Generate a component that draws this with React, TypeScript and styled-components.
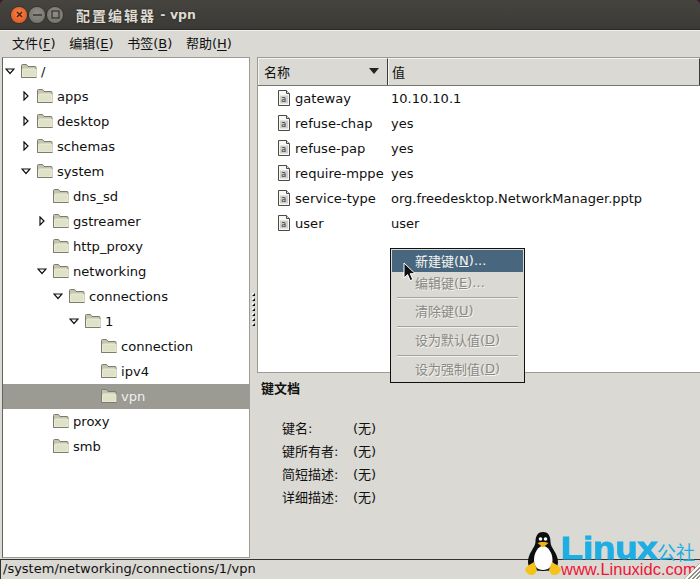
import React from "react";
import styled, { createGlobalStyle } from "styled-components";

const Global = createGlobalStyle`
  html, body { margin: 0; padding: 0; background: #dad9d4; }
  #root { width: 700px; height: 579px; overflow: hidden; }
`;

const FONT = `"DejaVu Sans", "Noto Sans CJK SC", sans-serif`;

const Window = styled.div`
  position: relative;
  width: 700px;
  height: 579px;
  display: flex;
  flex-direction: column;
  overflow: hidden;
  background: #3a1a30;
  font-family: ${FONT};
  font-size: 13.1px;
  color: #101010;
`;

const TitleBar = styled.div`
  height: 30px;
  flex: none;
  display: flex;
  align-items: center;
  padding-left: 11px;
  background: linear-gradient(#46443f, #3b3a36);
  border-radius: 5px 5px 0 0;
  box-sizing: border-box;
  border-bottom: 1px solid #2b2a26;
`;

const WinButton = styled.span<{ $bg: string }>`
  width: 16px;
  height: 16px;
  margin-right: 2px;
  border-radius: 50%;
  display: flex;
  align-items: center;
  justify-content: center;
  background: ${(p) => p.$bg};
  box-shadow: 0 0 0 1px #34332f;
`;

const Title = styled.div`
  margin-left: 11px;
  display: flex;
  align-items: center;
  font-weight: 700;
  color: #dfdbd2;
  text-shadow: 0 0 2px #1c1b18;
  white-space: nowrap;
`;

const TitleCn = styled.span`
  font-size: 14px;
  letter-spacing: 2px;
`;

const TitleLatin = styled.span`
  font-size: 12.5px;
  white-space: pre;
`;

const MenuBar = styled.div`
  height: 26px;
  flex: none;
  display: flex;
  align-items: center;
  gap: 13.6px;
  padding: 0 0 2px 12px;
  box-sizing: border-box;
  background: #dad9d4;
  border-top: 1px solid #f0efec;
`;

const MenuLabel = styled.span`
  font-size: 13px;
  u { text-underline-offset: 2px; }
`;

const Body = styled.div`
  flex: 1;
  min-height: 0;
  display: flex;
  padding-left: 2px;
  background: #dad9d4;
`;

const TreePanel = styled.div`
  width: 248px;
  flex: none;
  margin-top: 1px;
  margin-bottom: 1px;
  box-sizing: border-box;
  background: #fff;
  border: 1px solid #9d9b94;
  border-left-color: #64635d;
  padding-top: 1px;
`;

const TreeRow = styled.div<{ $depth: number; $selected?: boolean }>`
  height: 25px;
  display: flex;
  align-items: center;
  padding-left: ${(p) => p.$depth * 16}px;
  padding-bottom: 1px;
  box-sizing: border-box;
  background: ${(p) => (p.$selected ? "#9b9a93" : "transparent")};
  color: ${(p) => (p.$selected ? "#f0efec" : "#101010")};
`;

const ArrowSlot = styled.span<{ $open?: boolean }>`
  width: 17px;
  height: 16px;
  flex: none;
  display: flex;
  align-items: center;
  box-sizing: border-box;
  padding-left: ${(p) => (p.$open ? 2 : 4)}px;
`;

const RowName = styled.span`
  margin-left: 3px;
`;

const Splitter = styled.div`
  width: 7px;
  flex: none;
  display: flex;
  flex-direction: column;
  justify-content: center;
  align-items: center;
  gap: 2px;
  padding-top: 3px;
  box-sizing: border-box;
`;

const GripDot = styled.span`
  width: 3px;
  height: 3px;
  background: linear-gradient(135deg, #fff 0 45%, #111 55%);
`;

const RightPanel = styled.div`
  flex: 1;
  min-width: 0;
  display: flex;
  flex-direction: column;
`;

const ListBox = styled.div`
  height: 316px;
  flex: none;
  margin-top: 1px;
  box-sizing: border-box;
  background: #fff;
  border: 1px solid #9d9b94;
  border-right: none;
`;

const HeaderRow = styled.div`
  height: 28px;
  display: flex;
  box-sizing: border-box;
  background: #dad9d4;
  border-bottom: 1px solid #77766f;
`;

const HeaderCell = styled.div<{ $width?: number }>`
  ${(p) => (p.$width ? `width: ${p.$width}px; flex: none;` : "flex: 1;")}
  display: flex;
  align-items: center;
  justify-content: space-between;
  box-sizing: border-box;
  padding: 0 8px 2px ${(p) => (p.$width ? 5 : 3)}px;
  font-size: 13px;
  border-left: 1px solid #f5f4f1;
  border-top: 1px solid #f5f4f1;
  border-right: 1px solid #3c3c38;
`;

const KeyRow = styled.div`
  height: 25px;
  padding-bottom: 1px;
  box-sizing: border-box;
  display: flex;
  align-items: center;
`;

const KeyName = styled.div`
  width: 130px;
  flex: none;
  display: flex;
  align-items: center;
  gap: 5px;
  padding-left: 20px;
  box-sizing: border-box;
`;

const KeyValue = styled.span`
  padding-left: 3px;
  font-size: 13px;
`;

const DocSection = styled.div`
  flex: 1;
  padding: 5px 0 0 4px;
`;

const DocTitle = styled.div`
  font-weight: 700;
  font-size: 13px;
  height: 18px;
`;

const DocGrid = styled.div`
  margin: 20px 0 0 21px;
  display: grid;
  grid-template-columns: 71px auto;
  grid-auto-rows: 23px;
  align-items: center;
  justify-content: start;
  font-size: 13px;
`;

const StatusBar = styled.div`
  height: 20px;
  flex: none;
  box-sizing: border-box;
  padding-left: 3px;
  background: linear-gradient(90deg, #33332f 0 1px, #dad9d4 1px) no-repeat;
  background-color: #dad9d4;
  border-top: 1px solid #33332f;
  font-size: 13px;
  line-height: 18px;
  white-space: nowrap;
`;

const ContextMenu = styled.div`
  position: absolute;
  left: 390px;
  top: 248px;
  width: 135px;
  height: 135px;
  box-sizing: border-box;
  background: #dad9d4;
  border: 1px solid #111;
  padding: 1px;
  font-size: 13px;
  z-index: 2;
`;

const MenuItem = styled.div<{ $active?: boolean }>`
  height: 22px;
  display: flex;
  align-items: center;
  padding: 0 0 1px 23px;
  box-sizing: border-box;
  background: ${(p) => (p.$active ? "#48677f" : "transparent")};
  color: ${(p) => (p.$active ? "#f5f5f2" : "#8a8983")};
  text-shadow: ${(p) => (p.$active ? "none" : "1px 1px 0 #f4f3f0")};
`;

const MenuRule = styled.div<{ $top: number }>`
  height: 1px;
  margin: ${(p) => p.$top}px 5px 2px 5px;
  background: #a3a29b;
  box-shadow: 0 1px 0 #f2f1ee;
`;

const Cursor = styled.svg`
  position: absolute;
  left: 403px;
  top: 262px;
  z-index: 3;
`;

const Watermark = styled.div`
  position: absolute;
  left: 524px;
  top: 530px;
  width: 176px;
  height: 49px;
  z-index: 2;
`;

const Tux = styled.svg`
  position: absolute;
  left: 0;
  top: 1px;
`;

const LogoWord = styled.div`
  position: absolute;
  left: 37px;
  top: 7px;
  font-family: "Liberation Sans", Arial, sans-serif;
  font-size: 31px;
  line-height: 24px;
  font-weight: 700;
  color: #1eaee4;
  -webkit-text-stroke: 1px #1eaee4;
  transform: scaleX(1.17);
  transform-origin: left center;
`;

const LogoCn = styled.div`
  position: absolute;
  left: 133px;
  top: 13px;
  font-family: "Noto Sans CJK SC", sans-serif;
  font-size: 19px;
  line-height: 18px;
  color: #1eaee4;
  white-space: nowrap;
`;

const LogoUrl = styled.div`
  position: absolute;
  left: 37px;
  top: 32px;
  font-family: "Liberation Sans", Arial, sans-serif;
  font-size: 16.5px;
  line-height: 15px;
  color: #ef1437;
  white-space: nowrap;
`;

const ResizeGrip = styled.div`
  position: absolute;
  right: 0;
  bottom: 0;
  width: 16px;
  height: 16px;
  z-index: 3;
  clip-path: polygon(100% 0, 100% 100%, 0 100%);
  background: repeating-linear-gradient(135deg, #f7f6f3 0 1.500px, #8f8e87 1.500px 3px);
`;

const Folder = () => (
  <svg width="18" height="16" viewBox="0 0 18 16">
    <path d="M1.5 14.5V2.5a1 1 0 0 1 1-1h4l1.500 2h7a1 1 0 0 1 1 1v10z" fill="#c5c4ae" stroke="#7d7c6c" />
    <path d="M2.500 14V7.500a1.500 1.500 0 0 1 1.500-1.500h11a1 1 0 0 1 1 1v7z" fill="#dfe2c6" stroke="#f0f1e2" strokeWidth="0.8" />
    <path d="M1.500 14.500h15" stroke="#7d7c6c" />
  </svg>
);

const Arrow = ({ open }: { open: boolean }) =>
  open ? (
    <svg width="10" height="7" viewBox="0 0 10 7">
      <path d="M1 1h8L5 5.500z" fill="#fff" stroke="#111" strokeWidth="1.200" />
    </svg>
  ) : (
    <svg width="6" height="10" viewBox="0 0 6 10">
      <path d="M1 1l4 4-4 4z" fill="#fff" stroke="#111" strokeWidth="1.200" />
    </svg>
  );

const KeyIcon = () => (
  <svg width="12" height="16" viewBox="0 0 12 16">
    <path d="M.5.5h8l3 3v12H.5z" fill="#f7f7f4" stroke="#4a4a46" />
    <path d="M8.500.5v3h3" fill="#ddd" stroke="#4a4a46" />
    <rect x="2" y="5.500" width="8" height="8" fill="#cfcfcb" />
    <text x="3.200" y="12" fontSize="8" fontFamily="DejaVu Sans" fill="#333">a</text>
  </svg>
);

type Node = { name: string; depth: number; arrow?: "open" | "closed"; selected?: boolean };

const tree: Node[] = [
  { name: "/", depth: 0, arrow: "open" },
  { name: "apps", depth: 1, arrow: "closed" },
  { name: "desktop", depth: 1, arrow: "closed" },
  { name: "schemas", depth: 1, arrow: "closed" },
  { name: "system", depth: 1, arrow: "open" },
  { name: "dns_sd", depth: 2 },
  { name: "gstreamer", depth: 2, arrow: "closed" },
  { name: "http_proxy", depth: 2 },
  { name: "networking", depth: 2, arrow: "open" },
  { name: "connections", depth: 3, arrow: "open" },
  { name: "1", depth: 4, arrow: "open" },
  { name: "connection", depth: 5 },
  { name: "ipv4", depth: 5 },
  { name: "vpn", depth: 5, selected: true },
  { name: "proxy", depth: 2 },
  { name: "smb", depth: 2 },
];

const keys = [
  ["gateway", "10.10.10.1"],
  ["refuse-chap", "yes"],
  ["refuse-pap", "yes"],
  ["require-mppe", "yes"],
  ["service-type", "org.freedesktop.NetworkManager.pptp"],
  ["user", "user"],
];

const docs = ["键名:", "键所有者:", "简短描述:", "详细描述:"];

export default function App() {
  return (
    <Window>
      <Global />
      <TitleBar>
        <WinButton $bg="radial-gradient(circle at 50% 40%, #f4824a, #dc5018)">
          <svg width="7" height="7" viewBox="0 0 7 7"><path d="M1 1l5 5M6 1L1 6" stroke="#4a2010" strokeWidth="1.400" /></svg>
        </WinButton>
        <WinButton $bg="radial-gradient(circle at 50% 40%, #8f8d85, #6e6c65)">
          <svg width="9" height="2" viewBox="0 0 9 2"><path d="M0 1h9" stroke="#33322e" strokeWidth="1.400" /></svg>
        </WinButton>
        <WinButton $bg="radial-gradient(circle at 50% 40%, #8f8d85, #6e6c65)">
          <svg width="9" height="9" viewBox="0 0 9 9"><rect x="1" y="1" width="7" height="7" fill="none" stroke="#33322e" strokeWidth="1.200" /></svg>
        </WinButton>
        <Title>
          <TitleCn>配置编辑器</TitleCn>
          <TitleLatin> - vpn</TitleLatin>
        </Title>
      </TitleBar>
      <MenuBar>
        <MenuLabel>文件(<u>F</u>)</MenuLabel>
        <MenuLabel>编辑(<u>E</u>)</MenuLabel>
        <MenuLabel>书签(<u>B</u>)</MenuLabel>
        <MenuLabel>帮助(<u>H</u>)</MenuLabel>
      </MenuBar>
      <Body>
        <TreePanel>
          {tree.map((n) => (
            <TreeRow key={n.name} $depth={n.depth} $selected={n.selected}>
              <ArrowSlot $open={n.arrow === "open"}>{n.arrow && <Arrow open={n.arrow === "open"} />}</ArrowSlot>
              <Folder />
              <RowName>{n.name}</RowName>
            </TreeRow>
          ))}
        </TreePanel>
        <Splitter>
          {[0, 1, 2, 3, 4, 5, 6].map((i) => <GripDot key={i} />)}
        </Splitter>
        <RightPanel>
          <ListBox>
            <HeaderRow>
              <HeaderCell $width={130}>
                名称
                <svg width="10" height="6" viewBox="0 0 10 6"><path d="M0 0h10L5 6z" fill="#222" /></svg>
              </HeaderCell>
              <HeaderCell>值</HeaderCell>
            </HeaderRow>
            {keys.map(([k, v]) => (
              <KeyRow key={k}>
                <KeyName><KeyIcon />{k}</KeyName>
                <KeyValue>{v}</KeyValue>
              </KeyRow>
            ))}
          </ListBox>
          <DocSection>
            <DocTitle>键文档</DocTitle>
            <DocGrid>
              {docs.map((d) => (
                <React.Fragment key={d}>
                  <span>{d}</span>
                  <span>(无)</span>
                </React.Fragment>
              ))}
            </DocGrid>
          </DocSection>
        </RightPanel>
      </Body>
      <StatusBar>/system/networking/connections/1/vpn</StatusBar>
      <ContextMenu>
        <MenuItem $active>新建键(<u>N</u>)...</MenuItem>
        <MenuItem>编辑键(<u>E</u>)...</MenuItem>
        <MenuRule $top={3} />
        <MenuItem>清除键(<u>U</u>)</MenuItem>
        <MenuRule $top={4} />
        <MenuItem>设为默认值(<u>D</u>)</MenuItem>
        <MenuRule $top={4} />
        <MenuItem>设为强制值(<u>D</u>)</MenuItem>
      </ContextMenu>
      <Cursor width="14" height="21" viewBox="0 0 14 21">
        <path d="M1 1v15l3.600-3.400 2.600 6 2.600-1.100-2.600-5.800h5z" fill="#111" stroke="#fff" strokeWidth="1" />
      </Cursor>
      <Watermark>
        <Tux width="38" height="45" viewBox="0 0 38 45">
          <path d="M19 1c6 0 7.500 5 7.500 10 0 6 7.500 11 7.500 20 0 6-4 9-15 9S4 37 4 31c0-9 7-14 7.500-20C11.500 6 13 1 19 1z" fill="#0e0e0e" />
          <path d="M19 15c5 0 9.500 7 9.500 14 0 6-3.500 10-9.500 10s-9-4-9-10c0-7 4-14 9-14z" fill="#fff" />
          <circle cx="16.500" cy="8" r="1.800" fill="#fff" />
          <circle cx="21.500" cy="8" r="1.800" fill="#fff" />
          <path d="M13.500 12c2-1.500 9-1.500 11 0l-5.500 4.500z" fill="#f3b10f" />
          <path d="M1 39c0-3 6-6 9-8l3 8c-1 3-3 5-5 5-3 0-6-2-7-5z" fill="#f6c21a" />
          <path d="M37 39c0-3-6-6-9-8l-3 8c1 3 3 5 5 5 3 0 6-2 7-5z" fill="#f6c21a" />
        </Tux>
        <LogoWord>Linux</LogoWord>
        <LogoCn>公社</LogoCn>
        <LogoUrl>www.Linuxidc.com</LogoUrl>
      </Watermark>
      <ResizeGrip />
    </Window>
  );
}
